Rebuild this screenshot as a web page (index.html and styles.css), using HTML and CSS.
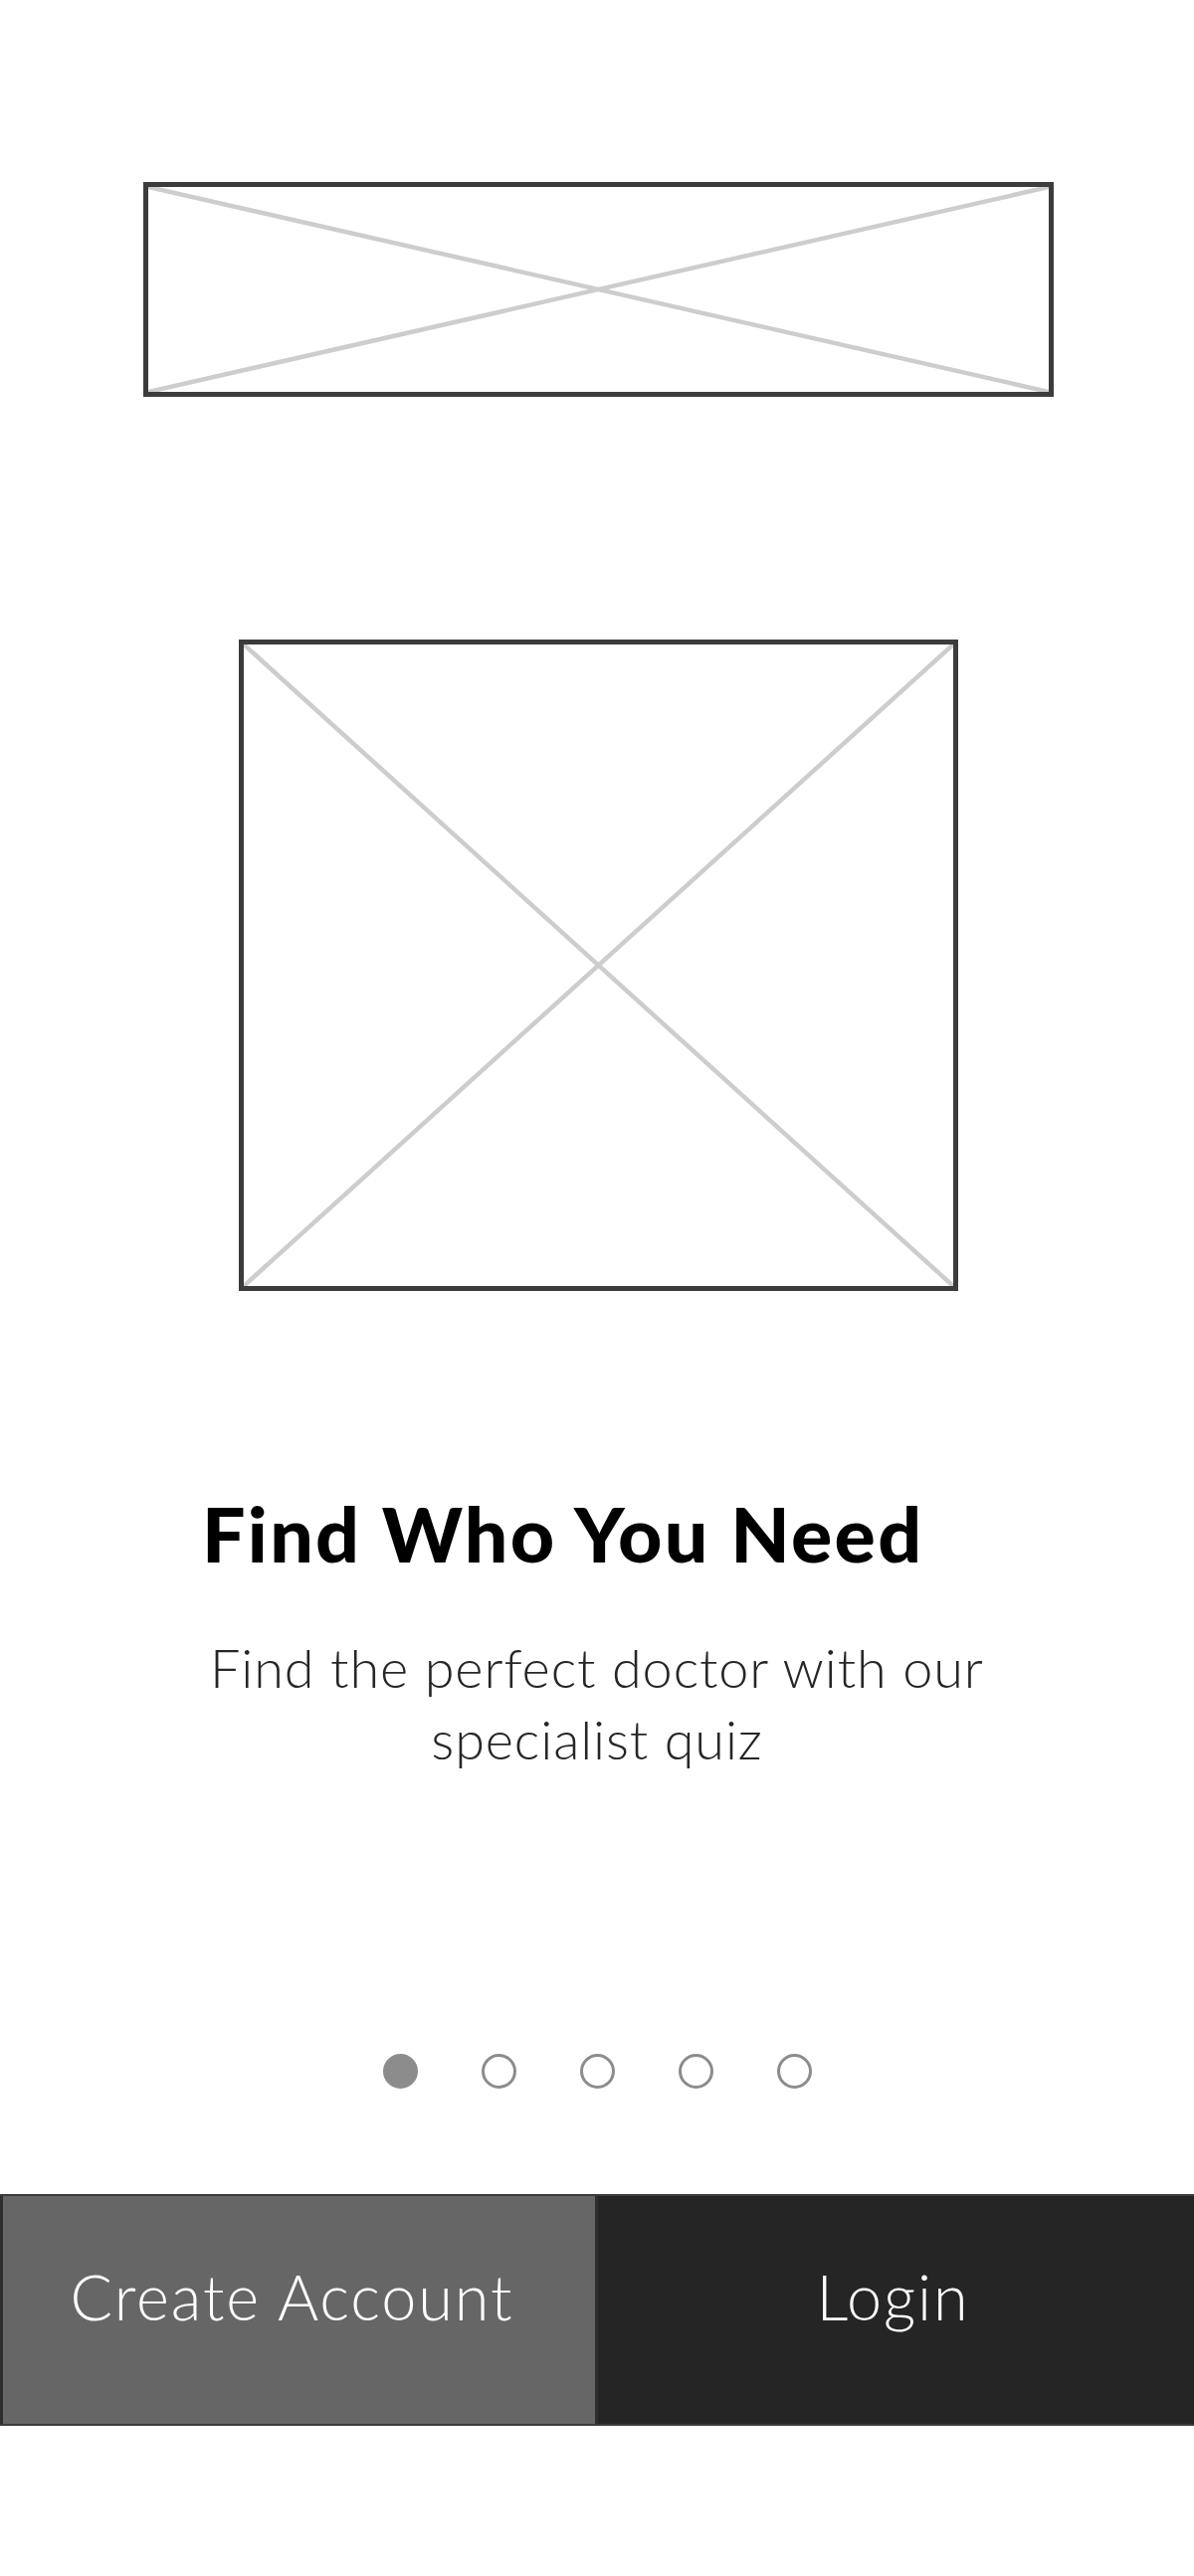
FILE: index.html
```html
<!DOCTYPE html>
<html lang="en">
<head>
<meta charset="utf-8">
<title>Find Who You Need</title>
<link rel="stylesheet" href="styles.css">
</head>
<body>
<main class="screen">
  <div class="ph ph-logo">
    <svg class="ph-x" viewBox="0 0 100 100" preserveAspectRatio="none" aria-hidden="true">
      <line x1="0" y1="0" x2="100" y2="100" vector-effect="non-scaling-stroke"/>
      <line x1="100" y1="0" x2="0" y2="100" vector-effect="non-scaling-stroke"/>
    </svg>
  </div>
  <div class="ph ph-hero">
    <svg class="ph-x" viewBox="0 0 100 100" preserveAspectRatio="none" aria-hidden="true">
      <line x1="0" y1="0" x2="100" y2="100" vector-effect="non-scaling-stroke"/>
      <line x1="100" y1="0" x2="0" y2="100" vector-effect="non-scaling-stroke"/>
    </svg>
  </div>
  <h1 class="title">Find Who You Need</h1>
  <p class="desc">Find the perfect doctor with our<br>specialist quiz</p>
  <div class="dots">
    <span class="dot active"></span>
    <span class="dot"></span>
    <span class="dot"></span>
    <span class="dot"></span>
    <span class="dot"></span>
  </div>
  <div class="actions">
    <button class="btn btn-create">Create Account</button>
    <button class="btn btn-login">Login</button>
  </div>
</main>
</body>
</html>
```
FILE: styles.css
```css
* { box-sizing: border-box; }
html, body { margin: 0; padding: 0; background: #ffffff; }
body { font-family: Lato, "Open Sans", sans-serif; }

.screen {
  width: 1200px;
  height: 2590px;
  display: flex;
  flex-direction: column;
}

.ph {
  border: 5px solid #3c3c3c;
  background: #fff;
  flex: none;
}
.ph-x {
  display: block;
  width: 100%;
  height: 100%;
}
.ph-x line {
  stroke: #cdcdcd;
  stroke-width: 4.5;
}
.ph-logo {
  margin: 183px 0 0 144px;
  width: 915px;
  height: 216px;
}
.ph-hero {
  margin: 244px 0 0 240px;
  width: 723px;
  height: 655px;
}

.title {
  margin: 197px 0 0 0;
  padding-left: 203px;
  font-family: Lato, sans-serif;
  font-weight: 900;
  font-size: 77px;
  line-height: 92px;
  letter-spacing: 2.3px;
  color: #000;
}

.desc {
  margin: 54px 0 0 0;
  text-align: center;
  font-family: Lato, sans-serif;
  font-weight: 300;
  font-size: 54px;
  line-height: 72px;
  letter-spacing: 0.9px;
  color: #262626;
}

.dots {
  margin-top: 280px;
  display: flex;
  justify-content: center;
  gap: 64px;
}
.dot {
  width: 35px;
  height: 35px;
  border-radius: 50%;
  border: 3px solid #8c8c8c;
  background: #fff;
}
.dot.active { background: #8c8c8c; }

.actions {
  margin-top: 106px;
  height: 233px;
  display: flex;
  background: #252525;
  border-top: 2px solid #3a3a3a;
  border-bottom: 2px solid #3a3a3a;
}
.btn {
  border: none;
  margin: 0;
  font-family: Lato, sans-serif;
  font-weight: 300;
  font-size: 63px;
  letter-spacing: 1.9px;
  color: #fff;
  display: flex;
  align-items: center;
  justify-content: center;
  padding: 0 6px 28px 0;
  cursor: pointer;
}
.btn-create {
  width: 601px;
  background: #666666;
  border: 3px solid #2e2e2e;
  border-top: none;
  border-bottom: none;
  padding-right: 14px;
}
.btn-login {
  flex: 1;
  background: #252525;
}
```
